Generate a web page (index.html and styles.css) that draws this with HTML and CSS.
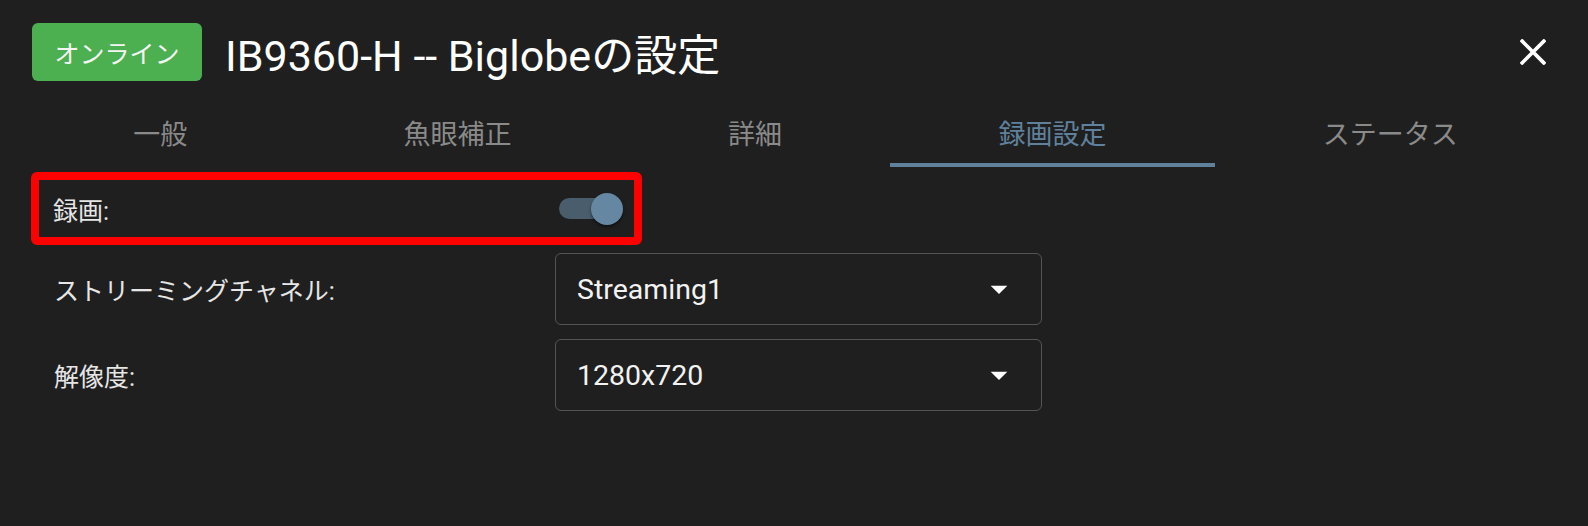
FILE: index.html
```html
<!DOCTYPE html>
<html lang="ja">
<head>
    <meta charset="UTF-8">
    <meta name="viewport" content="width=device-width, initial-scale=1.0">
    <title>録画設定</title>
    <link rel="stylesheet" href="styles.css">
</head>
<body>
    <div class="dialog">
        <!-- cabecera -->
        <div class="header">
            <span class="badge">オンライン</span>
            <h2 class="title">IB9360-H -- Biglobeの設定</h2>
            <button class="closeBtn" aria-label="close">
                <svg viewBox="0 0 24 24" width="26" height="26">
                    <path d="M2 2 L22 22 M22 2 L2 22" stroke="#fff" stroke-width="3.4" stroke-linecap="square"/>
                </svg>
            </button>
        </div>

        <!-- pestañas -->
        <div class="tabs">
            <div class="tab">一般</div>
            <div class="tab">魚眼補正</div>
            <div class="tab">詳細</div>
            <div class="tab active">録画設定</div>
            <div class="tab">ステータス</div>
        </div>

        <!-- formulario -->
        <div class="form">
            <div class="highlight">
                <span class="label">録画:</span>
                <div class="switch">
                    <span class="track"></span>
                    <span class="thumb"></span>
                </div>
            </div>

            <div class="row">
                <span class="label rowLabel">ストリーミングチャネル:</span>
                <div class="select">
                    <span>Streaming1</span>
                    <svg class="arrow" viewBox="0 0 24 24" width="40" height="40"><path d="M7 10l5 5 5-5z" fill="#fff"/></svg>
                </div>
            </div>

            <div class="row">
                <span class="label rowLabel">解像度:</span>
                <div class="select">
                    <span>1280x720</span>
                    <svg class="arrow" viewBox="0 0 24 24" width="40" height="40"><path d="M7 10l5 5 5-5z" fill="#fff"/></svg>
                </div>
            </div>
        </div>
    </div>
</body>
</html>
```

FILE: styles.css
```css
/* variables */
:root{
    --fondo: #1f1f1f;
    --texto: #e6e6e6;
    --gris: #8a8a8a;
    --azul: #5f819c;
    --fuente: Roboto, "Noto Sans CJK JP", sans-serif;
}
*{
    box-sizing: border-box;
}
body{
    margin: 0;
    background-color: var(--fondo);
    font-family: var(--fuente);
    color: var(--texto);
}
.dialog{
    width: 1588px;
    height: 526px;
    background-color: var(--fondo);
}
/* cabecera */
.header{
    display: flex;
    align-items: center;
    padding: 23px 42px 0 32px;
    height: 81px;
}
.badge{
    display: flex;
    align-items: center;
    justify-content: center;
    width: 170px;
    height: 58px;
    background-color: #4caf50;
    color: #f4f4f4;
    border-radius: 6px;
    font-size: 25px;
}
.title{
    margin: 0 0 0 23px;
    font-size: 43px;
    font-weight: 400;
    color: #fff;
}
.closeBtn{
    margin-left: auto;
    background: none;
    border: none;
    padding: 0;
    display: flex;
    cursor: pointer;
}
/* pestañas */
.tabs{
    display: flex;
    margin-top: 19px;
    padding: 0 22px 0 25px;
}
.tab{
    flex: 1 1 auto;
    text-align: center;
    font-size: 27px;
    line-height: 30px;
    padding: 20px 0 13px;
    color: var(--gris);
    border-bottom: 4px solid transparent;
}
.tab.active{
    color: var(--azul);
    border-bottom-color: var(--azul);
}
/* formulario */
.form{
    padding-left: 31px;
    padding-top: 5px;
}
.label{
    font-size: 25px;
    color: var(--texto);
}
.highlight{
    width: 611px;
    height: 73px;
    border: 8px solid #ff0000;
    border-radius: 6px;
    display: flex;
    align-items: center;
    justify-content: space-between;
    padding: 0 11px 0 14px;
}
.switch{
    display: flex;
    align-items: center;
    width: 64px;
    height: 32px;
}
.track{
    width: 53px;
    height: 21px;
    border-radius: 11px;
    background-color: #4a5d6c;
}
.thumb{
    width: 32px;
    height: 32px;
    margin-left: -21px;
    border-radius: 50%;
    background-color: #6687a2;
    box-shadow: 0 2px 3px rgba(0, 0, 0, 0.5);
}
.row{
    display: flex;
    align-items: center;
    margin-top: 8px;
    padding-left: 23px;
}
.row + .row{
    margin-top: 14px;
}
.rowLabel{
    width: 501px;
}
.select{
    display: flex;
    align-items: center;
    justify-content: space-between;
    width: 487px;
    height: 72px;
    border: 1px solid #545454;
    border-radius: 6px;
    padding: 0 22px 0 21px;
    font-size: 28.5px;
    color: #f2f2f2;
}
.arrow{
    display: block;
}
```
